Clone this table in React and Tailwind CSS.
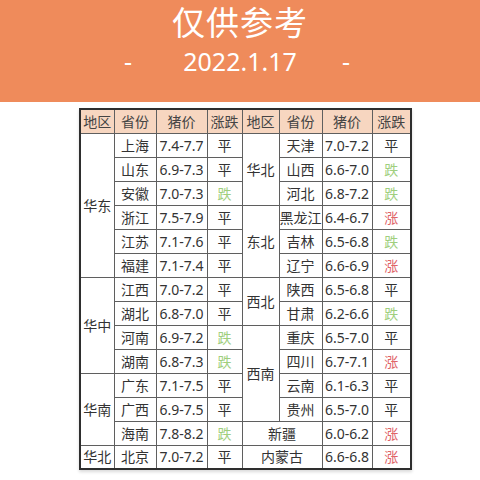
const left = [
  { region: "华东", rows: [["上海", "7.4-7.7", "平"], ["山东", "6.9-7.3", "平"], ["安徽", "7.0-7.3", "跌"], ["浙江", "7.5-7.9", "平"], ["江苏", "7.1-7.6", "平"], ["福建", "7.1-7.4", "平"]] },
  { region: "华中", rows: [["江西", "7.0-7.2", "平"], ["湖北", "6.8-7.0", "平"], ["河南", "6.9-7.2", "跌"], ["湖南", "6.8-7.3", "跌"]] },
  { region: "华南", rows: [["广东", "7.1-7.5", "平"], ["广西", "6.9-7.5", "平"], ["海南", "7.8-8.2", "跌"]] },
  { region: "华北", rows: [["北京", "7.0-7.2", "平"]] },
];

const right = [
  { region: "华北", rows: [["天津", "7.0-7.2", "平"], ["山西", "6.6-7.0", "跌"], ["河北", "6.8-7.2", "跌"]] },
  { region: "东北", rows: [["黑龙江", "6.4-6.7", "涨"], ["吉林", "6.5-6.8", "跌"], ["辽宁", "6.6-6.9", "涨"]] },
  { region: "西北", rows: [["陕西", "6.5-6.8", "平"], ["甘肃", "6.2-6.6", "跌"]] },
  { region: "西南", rows: [["重庆", "6.5-7.0", "平"], ["四川", "6.7-7.1", "涨"], ["云南", "6.1-6.3", "平"], ["贵州", "6.5-7.0", "平"]] },
  { region: null, rows: [["新疆", "6.0-6.2", "涨"]] },
  { region: null, rows: [["内蒙古", "6.6-6.8", "涨"]] },
];

// flatten groups into rows with rowspan info
const flat = (groups) =>
  groups.flatMap((g) =>
    g.rows.map((r, i) => ({ region: g.region, first: i === 0, span: g.rows.length, cells: r }))
  );

const trendColor = (t) => (t === "跌" ? "text-[#9fcf7e]" : t === "涨" ? "text-[#e06468]" : "text-[#333]");

const cell = "border border-[#5f5f5f] text-center align-middle p-0 h-[24px]";

const Half = ({ row }) => {
  if (row.region === null) {
    return (
      <>
        <td colSpan={2} className={cell}>{row.cells[0]}</td>
        <td className={cell}>{row.cells[1]}</td>
        <td className={`${cell} ${trendColor(row.cells[2])}`}>{row.cells[2]}</td>
      </>
    );
  }
  return (
    <>
      {row.first && (
        <td rowSpan={row.span} className={cell}>{row.region}</td>
      )}
      <td className={cell}>{row.cells[0]}</td>
      <td className={cell}>{row.cells[1]}</td>
      <td className={`${cell} ${trendColor(row.cells[2])}`}>{row.cells[2]}</td>
    </>
  );
};

export default function App() {
  const l = flat(left);
  const r = flat(right);

  return (
    <div className="w-[480px] h-[480px] bg-white overflow-hidden" style={{ fontFamily: '"Noto Sans", "Noto Sans CJK SC", sans-serif' }}>
      <div className="h-[102px] bg-[#ef8b5b] text-white flex flex-col items-center">
        <h1 className="text-[33px] leading-none mt-[6px] font-normal tracking-[1px]">仅供参考</h1>
        <div className="flex items-center mt-[10px] text-[25px] leading-none">
          <span className="w-[40px] text-center">-</span>
          <span className="w-[184px] text-center">2022.1.17</span>
          <span className="w-[40px] text-left pl-[10px]">-</span>
        </div>
      </div>

      <div className="mt-[6px] ml-[79px] w-max shadow-[0_2px_3px_rgba(0,0,0,0.15)]">
        <table className="table-fixed border-collapse border-2 border-[#2e2e2e] text-[14px] text-[#333] w-[331px]">
          <colgroup>
            <col className="w-[34px]" />
            <col className="w-[42px]" />
            <col className="w-[51px]" />
            <col className="w-[35px]" />
            <col className="w-[37px]" />
            <col className="w-[43px]" />
            <col className="w-[50px]" />
            <col className="w-[39px]" />
          </colgroup>
          <thead>
            <tr className="bg-[#f7d6c0] text-[#444]">
              {["地区", "省份", "猪价", "涨跌", "地区", "省份", "猪价", "涨跌"].map((h, i) => (
                <th key={i} className={`${cell} font-normal`}>{h}</th>
              ))}
            </tr>
          </thead>
          <tbody>
            {l.map((row, i) => (
              <tr key={i}>
                <Half row={row} />
                <Half row={r[i]} />
              </tr>
            ))}
          </tbody>
        </table>
      </div>
    </div>
  );
}
